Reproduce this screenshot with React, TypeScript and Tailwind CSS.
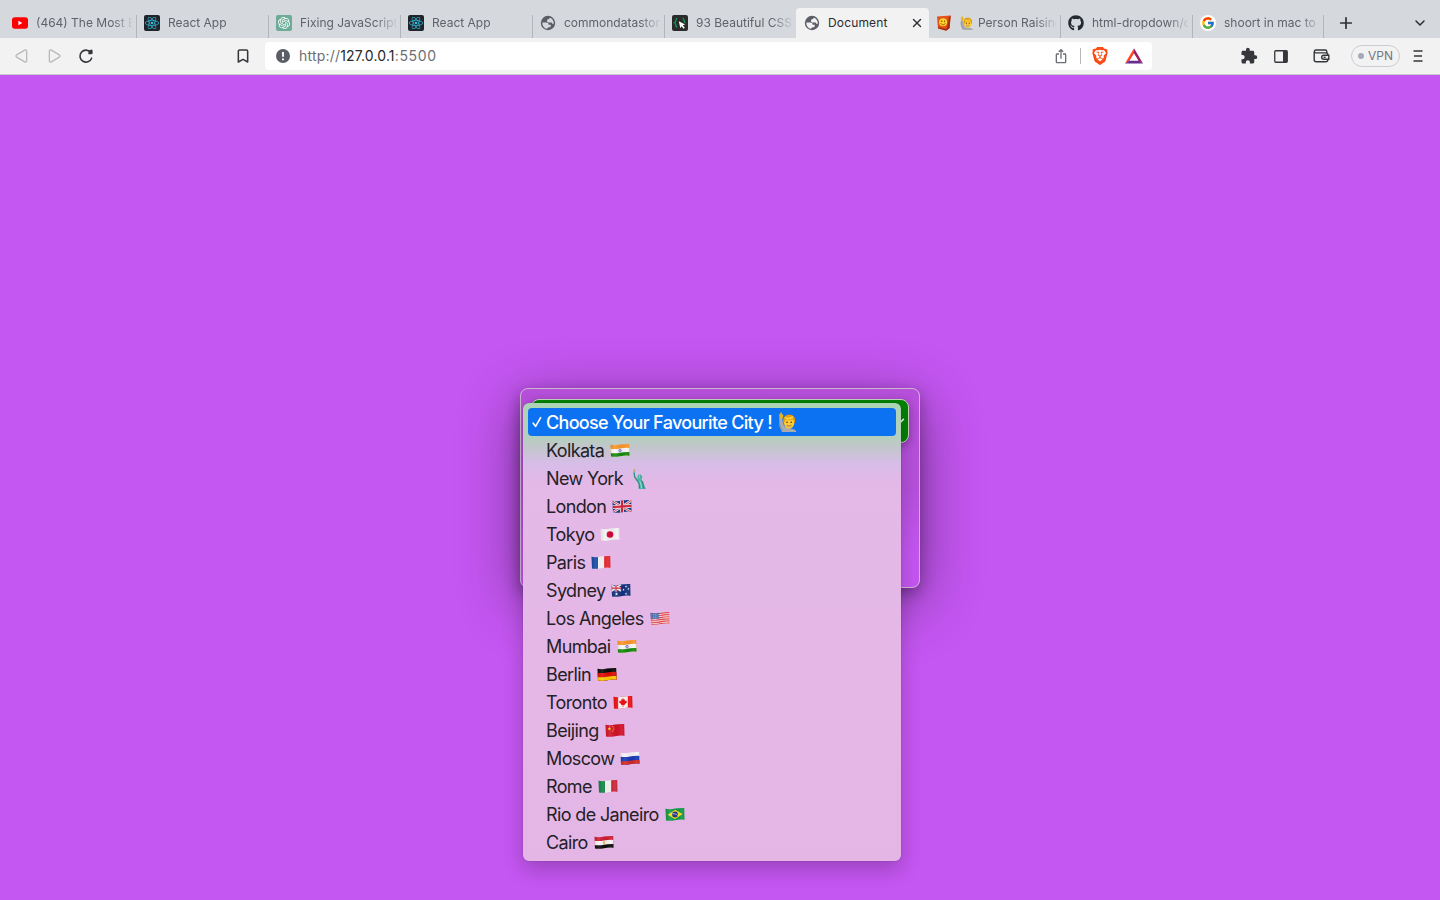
import React from "react";
import { Bookmark, ChevronDown, Play, Plus, X } from "lucide-react";
import { FaGithub, FaReact } from "react-icons/fa";
import { FcGoogle } from "react-icons/fc";
import { MdExtension, MdIosShare } from "react-icons/md";
import { SiBrave, SiOpenai } from "react-icons/si";

function YouTubeIcon() {
  return (
    <svg width="16" height="16" viewBox="0 0 16 16">
      <rect x="0" y="2.2" width="16" height="11.6" rx="2.8" fill="#f00" />
      <path d="M6.4 5.8 10.3 8l-3.9 2.2Z" fill="#fff" />
    </svg>
  );
}

function ReactTile() {
  return (
    <div className="flex size-4 items-center justify-center rounded-[2px] bg-[#20232a]">
      <FaReact size={14} color="#35bfe0" />
    </div>
  );
}

function OpenAiTile() {
  return (
    <div className="flex size-4 items-center justify-center rounded-[2px] bg-[#6bab97]">
      <SiOpenai size={12} color="#fff" />
    </div>
  );
}

function GlobeIcon({ land }: { land: string }) {
  return (
    <svg width="16" height="16" viewBox="0 0 16 16">
      <circle cx="8" cy="8" r="7.2" fill="#5b5e65" />
      <path d="M2.300 7.500h3.900c1.900 0 2.300.9 2.400 2.200h2.100v1.500c0 .7-.5 1.100-1.200 1.100H8.300c-.3.800-.9 1.100-1.800 1.400C3.900 13 2.200 10.900 2.300 7.500Z" fill={land} />
      <path d="M9.900 2.800c2.300.8 3.800 2.800 3.800 5.200 0 .5-.1.900-.2 1.300-1.100-.3-1.500-.9-1.800-1.700H9.500C7.900 7.600 7 6.900 7 5.700c0-1 .7-1.500 1.900-1.600Z" fill={land} />
    </svg>
  );
}

function CodeTile() {
  return (
    <svg width="16" height="16" viewBox="0 0 16 16">
      <rect width="16" height="16" rx="2" fill="#2b2b2b" />
      <path d="M5.4 3.2C3 3.2 4.8 6.8 2.6 7.8c2.2 1 .4 4.6 2.6 4.6M10.500 3.200c2.400 0 .6 3.600 2.800 4.600" fill="none" stroke="#149a50" strokeWidth="1.400" />
      <path d="m6.800 6.200 6.400 3.200-2.400.9 2 2.400-1.300 1.100-2-2.500-1.200 2Z" fill="#fff" />
    </svg>
  );
}

function BookIcon() {
  return (
    <svg width="16" height="16" viewBox="0 0 16 16">
      <path d="M1 1.400 14.700.4 13.500 13 10 15.700 2 13.500Z" fill="#e2501c" />
      <path d="m13 2.300 1.700-1.900L13.600 13 10.200 15.700Z" fill="#a92c10" />
      <path d="m2 13.300 8 2.200 3.400-2.600-.1-1-3.300 2L2 12Z" fill="#9c2c12" />
      <circle cx="7.100" cy="7.300" r="4" fill="#ffd52c" />
      <circle cx="5.800" cy="6.300" r=".7" fill="#7a3d00" />
      <circle cx="8.600" cy="6.300" r=".7" fill="#7a3d00" />
      <path d="M4.900 8.300c1.200 2 3.400 2 4.400 0" fill="none" stroke="#7a3d00" strokeWidth=".8" />
    </svg>
  );
}

function PersonEmoji({ size }: { size: number }) {
  return (
    <svg width={size} height={size} viewBox="0 0 20 20" className="shrink-0">
      <path d="M1.400 6C.8 9 .9 15 3 17.600L4 20h14.300c0-2-2.400-2.800-5-3.200L7.200 15C5 13 4.500 9.400 4.300 6.500Z" fill="#a9abb0" />
      <path d="M1.600 8c-.2 4 .6 7.600 3 10.400" stroke="#858991" strokeWidth=".8" fill="none" />
      <path d="M1.500 6.500 1.100 2.600c.2-.8.8-.7 1 .1L2.500.5c.3-.6 1-.5 1 .2l.8 1.800c.9-.2 1.200.5 1 1.200L4.700 6.600c-.9.5-2.300.5-3.200-.1Z" fill="#e9b320" />
      <path d="M5.400 12C4.300 6 6.600 2.600 11 2.600c4.600 0 6.900 3.400 5.900 8.600Z" fill="#c98a0c" />
      <ellipse cx="11.100" cy="10.900" rx="5.100" ry="5.800" fill="#fdcb33" />
      <path d="M5.300 10.200C5 5 7.800 2.900 11.200 2.900c4 0 6.200 2.300 5.700 7.100-1-.8-1.700-1.900-2-3.100-2.200 1.100-5.200 1-6.900.4-.3 1.500-1.200 2.500-2.700 2.900Z" fill="#e3a010" />
      <path d="M6.700 5.700c2.600 1 6 .8 8.200-.8" stroke="#ffd640" strokeWidth="1.400" fill="none" />
      <circle cx="9" cy="10.200" r=".8" fill="#593811" />
      <circle cx="13.200" cy="10.200" r=".8" fill="#593811" />
      <path d="M8.800 13.200c1.400.7 3.200.7 4.600 0-.4 1.900-4.200 2-4.600 0Z" fill="#fff" stroke="#914d13" strokeWidth=".5" />
    </svg>
  );
}

function LibertyEmoji() {
  return (
    <svg width="16" height="20" viewBox="0 0 16 20">
      <path d="M1.300 1.200 2.400.1l1.200 1.300L2.300 2.300Z" fill="#e2923c" />
      <path d="M1.200 2.400h2.100l-.6 1.800.7 3.600 2.500 2.400-.6-2.600 1-.9-.4-1.500 1.400.8 1.200-1 .5 1.600 1.600.3-.9 1.300.6 1.600-1.200 1.200 2.200 1.600.9 3.600 1.900 3.800H6.500l.4-4.600-3.500-4.800-1.500-3Z" fill="#4cb3a4" />
      <path d="m2.100 4 .9 5 3.800 4.200.8 6M9.500 11.500l1.500 3 .6 5M8 7l1.200 2.400" stroke="#23786f" strokeWidth=".8" fill="none" />
      <path d="m7.600 11.800 1.500 4 .4 3.500M7.600 6.900l.5 2.600" stroke="#a1e3d4" strokeWidth=".9" fill="none" />
    </svg>
  );
}

function starPoints(cx: number, cy: number, r: number) {
  return Array.from({ length: 10 }, (_, i) => {
    const a = -Math.PI / 2 + (i * Math.PI) / 5;
    const d = i % 2 ? r * 0.4 : r;
    return `${cx + d * Math.cos(a)},${cy + d * Math.sin(a)}`;
  }).join(" ");
}

function FlagArt({ code }: { code: string }) {
  const rows = (a: string, b: string, c: string) => (
    <>
      <rect width="20" height="16" fill={a} />
      <path d="M0 5.700Q5 6.500 10 5.500T20 4.900V16H0Z" fill={b} />
      <path d="M0 9.900Q5 10.700 10 9.700T20 9.100V16H0Z" fill={c} />
    </>
  );
  const cols = (a: string, b: string, c: string) => (
    <>
      <rect width="7.100" height="18" fill={a} />
      <rect x="7" width="6.400" height="18" fill={b} />
      <rect x="13.200" width="8" height="18" fill={c} />
    </>
  );
  switch (code) {
    case "in":
      return (
        <>
          {rows("#fb9627", "#f9f7f5", "#148a0c")}
          <circle cx="10" cy="7.600" r="1.300" fill="#c3c3ee" stroke="#5a5ac0" strokeWidth=".6" />
        </>
      );
    case "gb":
      return (
        <>
          <rect width="20" height="18" fill="#12337f" />
          <path d="M0 2 20 13.500M20 1 0 14" stroke="#f1eef2" strokeWidth="2.400" />
          <path d="M0 2 20 13.500M20 1 0 14" stroke="#d3203a" strokeWidth=".9" />
          <path d="M10 0v16M0 8.200 20 6.900" stroke="#f1eef2" strokeWidth="3.800" />
          <path d="M10 0v16M0 8.200 20 6.900" stroke="#d3203a" strokeWidth="2.200" />
        </>
      );
    case "jp":
      return (
        <>
          <rect width="20" height="18" fill="#f5f3f5" />
          <circle cx="10" cy="7.500" r="3.300" fill="#d30634" />
        </>
      );
    case "fr":
      return cols("#1649a5", "#f8f7f8", "#e8262a");
    case "it":
      return cols("#118444", "#f7f6f5", "#cd2637");
    case "ru":
      return rows("#f6f4f7", "#1638b5", "#d82720");
    case "de":
      return rows("#090909", "#de0d05", "#fdca05");
    case "eg":
      return (
        <>
          {rows("#d01c33", "#f8f5f4", "#0b0b0b")}
          <path d="M9.200 6.200h1.700v2.900H9.200Z" fill="#e0b95a" />
        </>
      );
    case "au":
      return (
        <>
          <rect width="20" height="18" fill="#16327f" />
          <path d="M0 2 10 8M10 1.500 0 8.500" stroke="#f0eef4" strokeWidth="1.600" />
          <path d="M5 0v8.500M0 5.200h10" stroke="#f0eef4" strokeWidth="2.400" />
          <path d="M5 0v8.500M0 5.200h10" stroke="#d91b38" strokeWidth="1.300" />
          <polygon points={starPoints(5.5, 11, 1.7)} fill="#fff" />
          <polygon points={starPoints(15, 3.5, 1.2)} fill="#fff" />
          <polygon points={starPoints(15, 10.7, 1.3)} fill="#fff" />
          <polygon points={starPoints(12.5, 6.7, 1.2)} fill="#fff" />
          <polygon points={starPoints(17.4, 5.9, 1.2)} fill="#fff" />
        </>
      );
    case "us":
      return (
        <>
          <rect width="20" height="18" fill="#fbeaec" />
          <path
            d="M0 2.600Q5 3.400 10 2.400T20 1.600M0 4.700Q5 5.500 10 4.500T20 3.700M0 6.800Q5 7.600 10 6.600T20 5.800M0 8.900Q5 9.700 10 8.700T20 7.900M0 11Q5 11.800 10 10.800T20 10M0 13.100Q5 13.900 10 12.900T20 12.100"
            stroke="#e5404c"
            strokeWidth="1.200"
            fill="none"
          />
          <rect width="8.800" height="7.800" fill="#4269b0" />
          <path d="M1.500 3.400h7M1.500 5h7M1.500 6.600h7" stroke="#d8def0" strokeWidth=".6" strokeDasharray=".7 1" />
        </>
      );
    case "ca":
      return (
        <>
          <rect width="20" height="18" fill="#ee0d10" />
          <rect x="5.200" width="9.600" height="18" fill="#f9f6f7" />
          <path d="m10 3 .9 1.700 1-.5-.2 2.100 1.700-1-.1 1.300 1 .4-2.600 2.200.2.900-1.600-.2v2h-.6v-2l-1.600.2.200-.9-2.600-2.200 1-.4-.1-1.300 1.700 1-.2-2.100 1 .5Z" fill="#ee0d10" />
        </>
      );
    case "cn":
      return (
        <>
          <rect width="20" height="18" fill="#d21128" />
          <polygon points={starPoints(4.4, 5.6, 2)} fill="#fbd91a" />
          <circle cx="7.900" cy="3.600" r=".5" fill="#fbd91a" />
          <circle cx="8.800" cy="5" r=".5" fill="#fbd91a" />
          <circle cx="8.600" cy="6.700" r=".5" fill="#fbd91a" />
          <circle cx="7.400" cy="8" r=".5" fill="#fbd91a" />
        </>
      );
    default:
      return (
        <>
          <rect width="20" height="18" fill="#109a45" />
          <path d="m10.200 2.700 7.300 4.300-7.500 5.300-7.300-4.500Z" fill="#f9dd1b" />
          <circle cx="10" cy="7.500" r="2.900" fill="#263d8c" />
          <path d="M7.300 6.800c2-.3 4 .2 5.400 1.700" stroke="#dce4f2" strokeWidth=".7" fill="none" />
        </>
      );
  }
}

function Flag({ code }: { code: string }) {
  return (
    <svg width="20" height="15" viewBox="0 0 20 15">
      <defs>
        <clipPath id={`wave-${code}`}>
          <path d="M.5 1.700Q5 2.600 10 1.600T19.200 1L19.500 12.800Q15 12.200 10 13.200T1 13.600Z" />
        </clipPath>
        <linearGradient id={`shade-${code}`}>
          <stop offset="0" stopColor="#000" stopOpacity=".1" />
          <stop offset=".25" stopColor="#fff" stopOpacity=".1" />
          <stop offset=".6" stopColor="#000" stopOpacity=".04" />
          <stop offset=".85" stopColor="#fff" stopOpacity=".08" />
          <stop offset="1" stopColor="#000" stopOpacity=".08" />
        </linearGradient>
      </defs>
      <g clipPath={`url(#wave-${code})`}>
        <FlagArt code={code} />
        <rect width="20" height="15" fill={`url(#shade-${code})`} />
      </g>
    </svg>
  );
}

type TabInfo = {
  title: string;
  icon: React.ReactNode;
  active?: boolean;
  separator?: boolean;
  emoji?: boolean;
};

const tabs: TabInfo[] = [
  { title: "(464) The Most B", icon: <YouTubeIcon />, separator: true },
  { title: "React App", icon: <ReactTile />, separator: true },
  { title: "Fixing JavaScript", icon: <OpenAiTile />, separator: true },
  { title: "React App", icon: <ReactTile />, separator: true },
  { title: "commondatastora", icon: <GlobeIcon land="#d5d8dd" />, separator: true },
  { title: "93 Beautiful CSS", icon: <CodeTile /> },
  { title: "Document", icon: <GlobeIcon land="#f2f2f2" />, active: true },
  { title: "Person Raising", icon: <BookIcon />, separator: true, emoji: true },
  { title: "html-dropdown/c", icon: <FaGithub size={16} color="#24292f" />, separator: true },
  {
    title: "shoort in mac to",
    icon: (
      <div className="flex size-4 items-center justify-center rounded-full bg-white">
        <FcGoogle size={14} />
      </div>
    ),
    separator: true,
  },
];

function Tab({ tab, last }: { tab: TabInfo; last: boolean }) {
  return (
    <div
      className={
        tab.active
          ? "-mr-px flex h-[30px] w-[133px] items-center rounded-t-[4px] bg-[#f2f2f2] pl-2 text-[#2a2c30]"
          : "flex h-[30px] w-[132px] items-center pl-2 text-[#5f6369]"
      }
    >
      <div className="flex w-4 shrink-0 justify-center">{tab.icon}</div>
      <div
        className={
          tab.active
            ? "ml-2 flex w-24 shrink-0 items-center text-[12px] leading-[30px] tracking-[0.150px] whitespace-nowrap"
            : "ml-2 flex w-24 shrink-0 items-center overflow-hidden [mask-image:linear-gradient(to_right,black_76px,transparent_98px)] text-[12px] leading-[30px] tracking-[0px] whitespace-nowrap"
        }
      >
        {tab.emoji && (
          <span className="mr-1">
            <PersonEmoji size={14} />
          </span>
        )}
        {tab.title}
      </div>
      {tab.active && <X size={14} strokeWidth={2.4} className="-ml-[14px] shrink-0 text-[#2f3136]" />}
      {tab.separator && (
        <div className={last ? "mt-[7px] ml-[3px] h-[23px] w-px shrink-0 bg-[#b2b5b9]" : "mt-[7px] ml-1 h-[23px] w-px shrink-0 bg-[#b2b5b9]"} />
      )}
    </div>
  );
}

function TabStrip() {
  return (
    <div className="flex h-[38px] items-end bg-[#d5d8dd] pl-1">
      {tabs.map((tab, i) => (
        <Tab key={i} tab={tab} last={i === tabs.length - 1} />
      ))}
      <div className="flex h-[30px] flex-1 items-center justify-between pr-[12px] pl-[13px] text-[#2f3136]">
        <Plus size={18} strokeWidth={2.3} />
        <ChevronDown size={16} strokeWidth={2.3} />
      </div>
    </div>
  );
}

function ReloadIcon() {
  return (
    <svg width="16" height="16" viewBox="0 0 16 16">
      <path d="M13.600 10.200A6 6 0 1 1 12.600 4.300" fill="none" stroke="#35373c" strokeWidth="1.600" strokeLinecap="round" />
      <path d="M10.100 2.300c1.400.5 2.300-.7 3.500-.8.8 0 1 .8 1 1.600v2c0 .8-.4 1.200-1.200 1.200h-2c-1.200 0-1.600-1-.8-1.800Z" fill="#35373c" />
    </svg>
  );
}

function SiteInfoIcon() {
  return (
    <svg width="14" height="14" viewBox="0 0 14 14">
      <circle cx="7" cy="7" r="7" fill="#5a5d66" />
      <path d="M7 3v4.800M7 9.500v1.700" stroke="#fff" strokeWidth="1.900" />
    </svg>
  );
}

function BatIcon() {
  return (
    <svg width="18" height="16" viewBox="0 0 18 16">
      <path d="M9 .2 0 15.600l4.600-2.800L9 5.600Z" fill="#ff4724" />
      <path d="m9 .2 9 15.400-4.600-2.800L9 5.600Z" fill="#9e1f63" />
      <path d="M0 15.600h18l-4.600-3.100H4.600Z" fill="#662d91" />
      <path d="M9 5.800 4.900 12.500h8.200Z" fill="#fff" />
    </svg>
  );
}

function PanelIcon() {
  return (
    <svg width="14" height="13" viewBox="0 0 14 13">
      <rect x=".75" y=".75" width="12.500" height="11.500" rx="1" fill="none" stroke="#35373c" strokeWidth="1.300" />
      <path d="M9 .8h4.200v11.400H9Z" fill="#35373c" />
    </svg>
  );
}

function WalletIcon() {
  return (
    <svg width="17" height="14" viewBox="0 0 17 14" fill="none" stroke="#35373c" strokeWidth="1.400">
      <path d="M1.200 2.600v8.200c0 1.200.8 2 2 2h9.600c1.200 0 2-.8 2-2V5.600c0-1-.8-1.700-2-1.700H2.600C.9 3.900.9 1 2.900 1h9.300c.9 0 1.600.6 1.600 1.500V4" />
      <path d="M15.800 6.300h-5c-2.800 0-2.800 4 0 4h5Z" fill="#f2f2f2" />
      <path d="M10.600 8.300h2" />
    </svg>
  );
}

function Toolbar() {
  return (
    <div className="flex h-[37px] items-center border-b border-[#c9cacb] bg-[#f2f2f2]">
      <div className="flex items-center pl-[14px]">
        <Play size={16} strokeWidth={2} className="rotate-180 text-[#b9babc]" />
        <Play size={16} strokeWidth={2} className="ml-[16px] text-[#b9babc]" />
        <div className="ml-[16px]">
          <ReloadIcon />
        </div>
        <Bookmark size={16} strokeWidth={2.3} className="ml-[141px] text-[#35373c]" />
      </div>
      <div className="ml-[14px] flex h-7 w-[887px] items-center rounded-[4px] bg-white pl-[11px]">
        <SiteInfoIcon />
        <div className="ml-[9px] text-[14px] leading-5 tracking-[0.190px] text-[#6b6e73]">
          http://<span className="tracking-[0.150px] text-[#26282c]">127.0.0.1</span>
          <span className="tracking-[0.650px]">:5500</span>
        </div>
        <div className="ml-auto flex items-center pr-[9px]">
          <MdIosShare size={16} color="#6b6e73" />
          <div className="ml-[11px] h-4 w-px bg-[#b5b6b9]" />
          <SiBrave size={18} color="#fb4b14" className="ml-[10px]" />
          <div className="ml-[16px]">
            <BatIcon />
          </div>
        </div>
      </div>
      <div className="ml-[88px] flex items-center">
        <MdExtension size={18} color="#35373c" />
        <div className="ml-[16px]">
          <PanelIcon />
        </div>
        <div className="ml-[25px]">
          <WalletIcon />
        </div>
        <div className="ml-[21px] flex h-[22px] w-[49px] items-center justify-center rounded-full border border-[#cbccd3] text-[12px] text-[#73777f]">
          <span className="mr-1 size-1.5 rounded-full bg-[#a5a8bd]" />
          VPN
        </div>
        <svg width="10" height="12" viewBox="0 0 10 12" className="ml-[13px]">
          <path d="M.5 1h9M1 6h8M.5 11h9" stroke="#35373c" strokeWidth="1.500" />
        </svg>
      </div>
    </div>
  );
}

const cities = [
  { name: "Kolkata", flag: "in" },
  { name: "New York", flag: "liberty" },
  { name: "London", flag: "gb" },
  { name: "Tokyo", flag: "jp" },
  { name: "Paris", flag: "fr" },
  { name: "Sydney", flag: "au" },
  { name: "Los Angeles", flag: "us" },
  { name: "Mumbai", flag: "in" },
  { name: "Berlin", flag: "de" },
  { name: "Toronto", flag: "ca" },
  { name: "Beijing", flag: "cn" },
  { name: "Moscow", flag: "ru" },
  { name: "Rome", flag: "it" },
  { name: "Rio de Janeiro", flag: "br" },
  { name: "Cairo", flag: "eg" },
];

function CityMenu() {
  return (
    <div className="absolute top-[14px] left-[2px] h-[458px] w-[378px] rounded-[6px] bg-[linear-gradient(to_bottom,#acd5b2_0px,#b4cfbe_34px,#bfc8c8_42px,#d6bde7_60px,#e4b8e7_80px,#e4b6e6_100%)] p-[5px] text-[18px] text-[#242126] shadow-[0_0_1px_rgba(0,0,0,0.5),0_8px_20px_rgba(0,0,0,0.22)]">
      <div className="flex h-7 items-center rounded-[4px] bg-[#0d72f1] pl-1 font-medium text-white">
        <svg width="10" height="12" viewBox="0 0 10 12" fill="none">
          <path d="M1.200 7.200 3.600 10.300 8.600 1.700" stroke="#fff" strokeWidth="1.600" strokeLinecap="round" strokeLinejoin="round" />
        </svg>
        <span className="ml-1 pt-0.5 tracking-[-0.68px] whitespace-nowrap">Choose Your Favourite City !</span>
        <span className="ml-[6px] pt-px">
          <PersonEmoji size={20} />
        </span>
      </div>
      {cities.map((city) => (
        <div key={city.name} className="flex h-7 items-center pl-[18px]">
          <span className="pt-0.5 tracking-[-0.63px]">{city.name}</span>
          {city.flag === "liberty" ? (
            <span className="ml-[9px] pt-0.5">
              <LibertyEmoji />
            </span>
          ) : (
            <span className="ml-[6px] pt-0.5">
              <Flag code={city.flag} />
            </span>
          )}
        </div>
      ))}
    </div>
  );
}

export default function App() {
  return (
    <div className="flex h-[900px] w-[1440px] flex-col overflow-hidden bg-[#c456f1] font-['Inter','Liberation_Sans',sans-serif]">
      <TabStrip />
      <Toolbar />
      <main className="flex flex-1 items-center justify-center">
        <div className="relative h-[200px] w-[400px] rounded-[8px] border border-[#cdb5cf] bg-[linear-gradient(to_bottom,#b64fd9,#b550dc_50%,#c456f1_85%)] p-[10px] shadow-[0_5px_15px_rgba(0,0,0,0.3),0_15px_60px_rgba(0,0,0,0.42)]">
          <div className="flex h-11 items-center justify-end rounded-[8px] border border-[#c5d3bd] bg-[#048104] pr-[1px] text-white shadow-[0_3px_8px_rgba(0,0,0,0.3)]">
            <ChevronDown size={14} strokeWidth={2.5} />
          </div>
          <CityMenu />
        </div>
      </main>
    </div>
  );
}
